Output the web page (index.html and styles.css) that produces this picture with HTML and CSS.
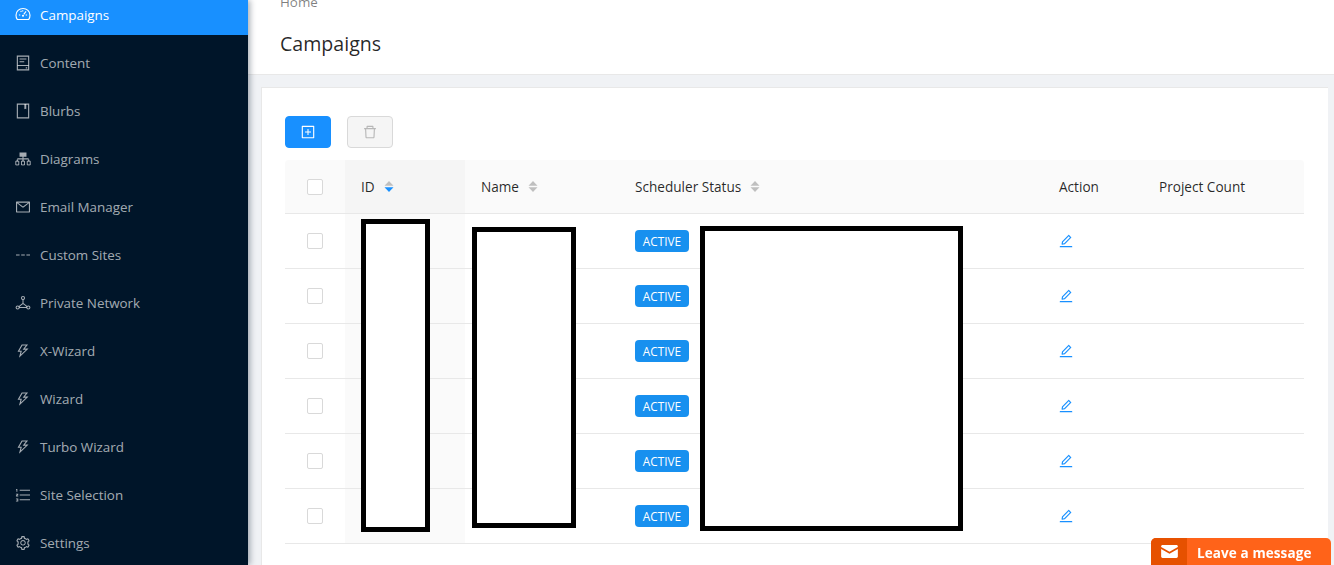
FILE: index.html
```html
<!DOCTYPE html>
<html lang="en">
<head>
<meta charset="utf-8">
<title>Campaigns</title>
<link rel="stylesheet" href="styles.css">
</head>
<body>
<svg class="defs" width="0" height="0" aria-hidden="true">
  <symbol id="i-dash" viewBox="0 0 1024 1024"><path fill="none" stroke="currentColor" stroke-width="72" d="M146 800C96 720 64 620 64 520 64 280 264 96 512 96s448 184 448 424c0 100-32 200-82 280z"/><path fill="currentColor" d="M250 480h90v70h-90zM684 480h90v70h-90zM330 270l60-50 50 60-60 50zM530 200h-70v90h70zM680 250l55 50-150 190-55-45z"/><circle cx="512" cy="560" r="70" fill="currentColor"/></symbol>
  <symbol id="i-content" viewBox="0 0 1024 1024"><path fill="none" stroke="currentColor" stroke-width="72" d="M150 70h724v884H150z"/><path fill="currentColor" d="M150 640h724v70H150zM290 220h440v70H290zM290 400h300v70H290zM690 790h90v70h-90z"/></symbol>
  <symbol id="i-book" viewBox="0 0 1024 1024"><path fill="none" stroke="currentColor" stroke-width="72" d="M150 70h724v884H150z"/><path fill="currentColor" d="M600 70h120v330l-60-40-60 40z"/></symbol>
  <symbol id="i-diagram" viewBox="0 0 1024 1024"><path fill="currentColor" d="M290 90h444v270H290zM476 360h72v130h-72zM150 470h724v72H150zM110 540h72v110h-72zM476 540h72v110h-72zM842 540h72v110h-72z"/><path fill="none" stroke="currentColor" stroke-width="60" d="M50 650h190v240H50zM417 650h190v240H417zM784 650h190v240H784z"/></symbol>
  <symbol id="i-mail" viewBox="0 0 1024 1024"><path fill="currentColor" d="M928 160H96c-17.700 0-32 14.300-32 32v640c0 17.700 14.300 32 32 32h832c17.700 0 32-14.300 32-32V192c0-17.700-14.300-32-32-32zm-40 110.800V792H136V270.800l-27.600-21.500 39.300-50.500 42.800 33.300h643.100l42.800-33.300 39.300 50.500-27.700 21.500zM833.600 232L512 482 190.400 232l-42.800-33.300-39.300 50.500 27.600 21.500 341.600 265.600a55.990 55.990 0 0 0 68.700 0L888 270.800l27.600-21.500-39.300-50.500-42.700 33.200z"/></symbol>
  <symbol id="i-dashes" viewBox="0 0 1024 1024"><path fill="currentColor" d="M64 476h230v72H64zM397 476h230v72H397zM730 476h230v72H730z"/></symbol>
  <symbol id="i-net" viewBox="0 0 1024 1024"><g fill="none" stroke="currentColor" stroke-width="66"><circle cx="512" cy="190" r="100"/><circle cx="170" cy="800" r="100"/><circle cx="854" cy="800" r="100"/><path d="M512 290v240M512 530L250 740M512 530l262 210M270 800h484"/></g></symbol>
  <symbol id="i-bolt" viewBox="0 0 1024 1024"><path fill="currentColor" d="M848 359.300H627.700L825.800 109c4.100-5.300.4-13-6.300-13H436c-2.800 0-5.500 1.500-6.900 4L170 547.500c-3.100 5.300.7 12 6.900 12h174.400l-89.400 357.600c-1.900 7.800 7.500 13.300 13.300 7.700L853.500 373c5.200-4.900 1.700-13.700-5.500-13.700zM378.200 732.500l60.300-241H281.100l189.600-327.400h224.600L487 427.400h211L378.200 732.500z"/></symbol>
  <symbol id="i-list" viewBox="0 0 1024 1024"><path fill="currentColor" d="M300 170h660v72H300zM300 476h660v72H300zM300 782h660v72H300zM70 130h80v170H90v-110H70zM60 430h150v60l-80 60h80v50H60v-60l80-60H60zM60 730h150v200H60v-50h90v-30H90v-40h60v-30H60z"/></symbol>
  <symbol id="i-gear" viewBox="0 0 1024 1024"><path fill="currentColor" d="M924.800 625.700l-65.500-56c3.100-19 4.700-38.400 4.700-57.800s-1.600-38.800-4.700-57.800l65.500-56a32.030 32.030 0 0 0 9.300-35.200l-.9-2.600a443.740 443.740 0 0 0-79.700-137.900l-1.800-2.100a32.120 32.120 0 0 0-35.100-9.500l-81.300 28.900c-30-24.600-63.500-44-99.700-57.600l-15.700-85a32.050 32.050 0 0 0-25.800-25.700l-2.700-.5c-52.100-9.400-106.900-9.400-159 0l-2.700.5a32.050 32.050 0 0 0-25.800 25.700l-15.800 85.400a351.860 351.860 0 0 0-99 57.400l-81.900-29.100a32 32 0 0 0-35.100 9.500l-1.800 2.100a446.020 446.020 0 0 0-79.700 137.900l-.9 2.600c-4.500 12.500-.8 26.500 9.300 35.200l66.300 56.600c-3.100 18.800-4.600 38-4.600 57.100 0 19.200 1.500 38.400 4.600 57.100L99 625.500a32.030 32.030 0 0 0-9.300 35.200l.9 2.600c18.100 50.400 44.900 96.900 79.700 137.900l1.800 2.100a32.120 32.120 0 0 0 35.100 9.500l81.900-29.100c29.800 24.500 63.100 43.900 99 57.400l15.800 85.400a32.050 32.050 0 0 0 25.800 25.700l2.700.5a449.400 449.400 0 0 0 159 0l2.700-.5a32.050 32.050 0 0 0 25.800-25.700l15.700-85a350 350 0 0 0 99.700-57.600l81.300 28.900a32 32 0 0 0 35.100-9.500l1.800-2.100c34.800-41.100 61.600-87.500 79.700-137.900l.9-2.600c4.500-12.300.8-26.300-9.300-35zM788.300 465.900c2.500 15.100 3.800 30.600 3.800 46.100s-1.300 31-3.800 46.100l-6.600 40.100 74.700 63.900a370.030 370.030 0 0 1-42.600 73.600L721 702.800l-31.400 25.800c-23.900 19.600-50.500 35-79.300 45.800l-38.100 14.300-17.900 97a377.500 377.500 0 0 1-85 0l-17.900-97.200-37.800-14.500c-28.500-10.800-55-26.200-78.700-45.700l-31.400-25.900-93.400 33.200c-17-22.900-31.200-47.600-42.600-73.600l75.500-64.500-6.500-40c-2.400-14.900-3.700-30.300-3.700-45.500 0-15.300 1.200-30.600 3.700-45.500l6.500-40-75.500-64.500c11.300-26.100 25.600-50.700 42.600-73.600l93.400 33.200 31.400-25.900c23.700-19.500 50.200-34.900 78.700-45.700l37.900-14.300 17.900-97.200c28.100-3.200 56.800-3.200 85 0l17.900 97 38.100 14.300c28.700 10.800 55.400 26.200 79.300 45.800l31.400 25.800 92.800-32.900c17 22.900 31.200 47.600 42.600 73.600L781.800 426l6.500 39.900zM512 326c-97.200 0-176 78.800-176 176s78.800 176 176 176 176-78.800 176-176-78.800-176-176-176zm79.200 255.200A111.600 111.600 0 0 1 512 614c-29.900 0-58-11.700-79.200-32.800A111.600 111.600 0 0 1 400 502c0-29.900 11.700-58 32.800-79.200C454 401.600 482.100 390 512 390c29.900 0 58 11.600 79.200 32.800A111.600 111.600 0 0 1 624 502c0 29.900-11.700 58-32.800 79.200z"/></symbol>
  <symbol id="i-plus" viewBox="0 0 1024 1024"><path fill="currentColor" d="M328 544h152v152c0 4.400 3.600 8 8 8h48c4.400 0 8-3.600 8-8V544h152c4.400 0 8-3.600 8-8v-48c0-4.400-3.600-8-8-8H544V328c0-4.400-3.600-8-8-8h-48c-4.400 0-8 3.600-8 8v152H328c-4.400 0-8 3.600-8 8v48c0 4.400 3.600 8 8 8z"/><path fill="currentColor" d="M880 112H144c-17.700 0-32 14.300-32 32v736c0 17.700 14.300 32 32 32h736c17.700 0 32-14.300 32-32V144c0-17.700-14.300-32-32-32zm-40 728H184V184h656v656z"/></symbol>
  <symbol id="i-trash" viewBox="0 0 1024 1024"><path fill="currentColor" d="M360 184h-8c4.400 0 8-3.600 8-8v8h304v-8c0 4.400 3.600 8 8 8h-8v72h72v-80c0-35.300-28.700-64-64-64H352c-35.300 0-64 28.700-64 64v80h72v-72zm504 72H160c-17.700 0-32 14.300-32 32v32c0 4.400 3.600 8 8 8h60.400l24.700 523c1.600 34.100 29.800 61 63.900 61h454c34.200 0 62.300-26.800 63.900-61l24.700-523H888c4.400 0 8-3.600 8-8v-32c0-17.700-14.300-32-32-32zM731.300 840H292.700l-24.200-512h487l-24.200 512z"/></symbol>
  <symbol id="i-edit" viewBox="0 0 1024 1024"><path fill="currentColor" d="M257.700 752c2 0 4-.2 6-.5L431.900 722c2-.4 3.900-1.300 5.300-2.800l423.900-423.900a9.960 9.960 0 0 0 0-14.100L694.900 114.900c-1.900-1.900-4.400-2.900-7.100-2.900s-5.200 1-7.100 2.900L256.800 538.800c-1.500 1.500-2.400 3.300-2.800 5.300l-29.500 168.200a33.500 33.500 0 0 0 9.400 29.800c6.600 6.400 14.900 9.900 23.800 9.900zm67.400-174.400L687.800 215l73.300 73.300-362.700 362.600-88.900 15.700 15.600-89zM880 836H144c-17.700 0-32 14.300-32 32v36c0 4.400 3.600 8 8 8h784c4.400 0 8-3.600 8-8v-36c0-17.700-14.300-32-32-32z"/></symbol>
  <symbol id="i-sort" viewBox="0 0 10 11"><path class="up" d="M5 0l4.500 4.700H.5z"/><path class="down" d="M5 11L.5 6.300h9z"/></symbol>
</svg>

<div class="app">
  <nav class="sidebar">
    <ul class="menu">
      <li class="item active"><svg class="ic"><use href="#i-dash"/></svg><span>Campaigns</span></li>
      <li class="item"><svg class="ic"><use href="#i-content"/></svg><span>Content</span></li>
      <li class="item"><svg class="ic"><use href="#i-book"/></svg><span>Blurbs</span></li>
      <li class="item"><svg class="ic"><use href="#i-diagram"/></svg><span>Diagrams</span></li>
      <li class="item"><svg class="ic"><use href="#i-mail"/></svg><span>Email Manager</span></li>
      <li class="item"><svg class="ic"><use href="#i-dashes"/></svg><span>Custom Sites</span></li>
      <li class="item"><svg class="ic"><use href="#i-net"/></svg><span>Private Network</span></li>
      <li class="item"><svg class="ic"><use href="#i-bolt"/></svg><span>X-Wizard</span></li>
      <li class="item"><svg class="ic"><use href="#i-bolt"/></svg><span>Wizard</span></li>
      <li class="item"><svg class="ic"><use href="#i-bolt"/></svg><span>Turbo Wizard</span></li>
      <li class="item"><svg class="ic"><use href="#i-list"/></svg><span>Site Selection</span></li>
      <li class="item"><svg class="ic"><use href="#i-gear"/></svg><span>Settings</span></li>
    </ul>
  </nav>

  <main class="main">
    <header class="page-head">
      <div class="crumb">Home</div>
      <h1 class="title">Campaigns</h1>
    </header>
    <section class="card">
      <div class="toolbar">
        <button class="btn btn-primary" type="button"><svg class="ic"><use href="#i-plus"/></svg></button>
        <button class="btn btn-disabled" type="button" disabled><svg class="ic"><use href="#i-trash"/></svg></button>
      </div>
      <table class="table">
        <colgroup><col class="c-check"><col class="c-id"><col class="c-name"><col class="c-status"><col class="c-action"><col class="c-count"></colgroup>
        <thead>
          <tr>
            <th class="center"><span class="check"></span></th>
            <th class="sorted"><span class="th">ID<svg class="sort sort-down"><use href="#i-sort"/></svg></span></th>
            <th><span class="th">Name<svg class="sort"><use href="#i-sort"/></svg></span></th>
            <th><span class="th">Scheduler Status<svg class="sort"><use href="#i-sort"/></svg></span></th>
            <th>Action</th>
            <th>Project Count</th>
          </tr>
        </thead>
        <tbody>
          <tr><td class="center"><span class="check"></span></td><td class="sorted"></td><td></td><td><span class="tag">ACTIVE</span></td><td><svg class="ic edit"><use href="#i-edit"/></svg></td><td></td></tr>
          <tr><td class="center"><span class="check"></span></td><td class="sorted"></td><td></td><td><span class="tag">ACTIVE</span></td><td><svg class="ic edit"><use href="#i-edit"/></svg></td><td></td></tr>
          <tr><td class="center"><span class="check"></span></td><td class="sorted"></td><td></td><td><span class="tag">ACTIVE</span></td><td><svg class="ic edit"><use href="#i-edit"/></svg></td><td></td></tr>
          <tr><td class="center"><span class="check"></span></td><td class="sorted"></td><td></td><td><span class="tag">ACTIVE</span></td><td><svg class="ic edit"><use href="#i-edit"/></svg></td><td></td></tr>
          <tr><td class="center"><span class="check"></span></td><td class="sorted"></td><td></td><td><span class="tag">ACTIVE</span></td><td><svg class="ic edit"><use href="#i-edit"/></svg></td><td></td></tr>
          <tr><td class="center"><span class="check"></span></td><td class="sorted"></td><td></td><td><span class="tag">ACTIVE</span></td><td><svg class="ic edit"><use href="#i-edit"/></svg></td><td></td></tr>
        </tbody>
      </table>
    </section>
  </main>
</div>

<div class="redact redact-id"></div>
<div class="redact redact-name"></div>
<div class="redact redact-status"></div>

<aside class="chat">
  <span class="chat-icon"><svg viewBox="0 0 18 14" width="17" height="13"><path fill="#fff" d="M1.500 0h15C17.300 0 18 .7 18 1.500v.6L9 7.400 0 2.100v-.6C0 .7.700 0 1.500 0zM0 4.200l9 5.300 9-5.300v8.300c0 .8-.7 1.500-1.500 1.500h-15C.7 14 0 13.300 0 12.500z"/></svg></span>
  <span class="chat-label">Leave a message</span>
</aside>
</body>
</html>
```

FILE: styles.css
```css
* { box-sizing: border-box; }
html, body { margin: 0; height: 100%; overflow: hidden; }
body {
  font-family: "Open Sans", "Noto Sans", sans-serif;
  font-size: 13.400px;
  color: rgba(0, 0, 0, .85);
  background: #f0f2f5;
}
.defs { position: absolute; }
.app { display: flex; height: 565px; overflow: hidden; }

.sidebar {
  flex: 0 0 248px;
  background: #001529;
  color: rgba(255, 255, 255, .65);
  box-shadow: 2px 0 6px rgba(0, 21, 41, .35);
  z-index: 1;
}
.menu { list-style: none; margin: -5px 0 0; padding: 0; }
.item {
  display: flex;
  align-items: center;
  gap: 9px;
  height: 40px;
  margin-bottom: 8px;
  padding-left: 15px;
  line-height: 40px;
}
.item.active { background: #1890ff; color: #fff; }
.ic { width: 16px; height: 16px; flex: none; display: block; }

.main { flex: 1; min-width: 0; }
.page-head {
  height: 75px;
  padding: 0 0 0 32px;
  background: #fff;
  border-bottom: 1px solid #e8e8e8;
  overflow: hidden;
}
.crumb { margin-top: -8px; line-height: 20px; color: rgba(0, 0, 0, .5); }
.title { margin: 18px 0 0; font-size: 19.600px; line-height: 28px; font-weight: 500; }

.card {
  margin: 12px 6px 0 12.500px;
  padding: 28px 24px 24px 23.500px;
  background: #fff;
  border: 1px solid #e8e8e8;
  border-width: 1px 0 0 1px;
  height: 600px;
}
.toolbar { display: flex; gap: 16px; margin-bottom: 12px; }
.btn {
  width: 46px;
  height: 32px;
  padding: 0;
  display: flex;
  align-items: center;
  justify-content: center;
  border-radius: 4px;
  border: 1px solid #d9d9d9;
}
.btn-primary { background: #1890ff; border-color: #1890ff; color: #fff; }
.btn-disabled { background: #f5f5f5; color: rgba(0, 0, 0, .25); }

.table { width: 1019px; table-layout: fixed; border-collapse: separate; border-spacing: 0; }
.c-check { width: 60px; }
.c-id { width: 120px; }
.c-name { width: 154px; }
.c-status { width: 424px; }
.c-action { width: 100px; }
.c-count { width: 161px; }
th, td { padding: 0 16px; border-bottom: 1px solid #e8e8e8; text-align: left; }
th { height: 54px; background: #fafafa; font-weight: 500; font-size: 13.600px; }
td { height: 55px; }
th:first-child { border-top-left-radius: 4px; }
th:last-child { border-top-right-radius: 4px; }
th.sorted { background: #f5f5f5; }
td.sorted { background: #fafafa; }
.center { padding: 0; }
.check {
  display: block;
  width: 16px;
  height: 16px;
  margin: 0 auto;
  background: #fff;
  border: 1px solid #d9d9d9;
  border-radius: 2px;
}
.th { display: inline-flex; align-items: center; gap: 9px; }
.sort { width: 10px; height: 11px; }
.up { fill: #bfbfbf; }
.down { fill: var(--sort-down, #bfbfbf); }
.sort-down { --sort-down: #1890ff; }
.tag {
  display: block;
  width: 54px;
  height: 22px;
  line-height: 23px;
  text-align: center;
  border-radius: 4px;
  background: #1890ef;
  color: #fff;
  font-size: 11.800px;
}
.edit { color: #1890ff; margin-left: -1px; }

.redact {
  position: absolute;
  background: #fff;
  border: 5px solid #000;
}
.redact-id { left: 361px; top: 219px; width: 69px; height: 313px; }
.redact-name { left: 472px; top: 227px; width: 104px; height: 301px; }
.redact-status { left: 700px; top: 226px; width: 263px; height: 305px; }

.chat {
  position: fixed;
  left: 1151px;
  bottom: 0;
  width: 180px;
  height: 27px;
  display: flex;
  align-items: stretch;
  background: #ff6319;
  border-radius: 5px 5px 0 0;
  overflow: hidden;
  color: #fff;
}
.chat-icon { width: 36px; display: flex; align-items: center; justify-content: center; background: #e65100; }
.chat-label { margin-left: 10px; font-size: 13.500px; line-height: 30px; font-weight: 700; letter-spacing: .1px; }
```
